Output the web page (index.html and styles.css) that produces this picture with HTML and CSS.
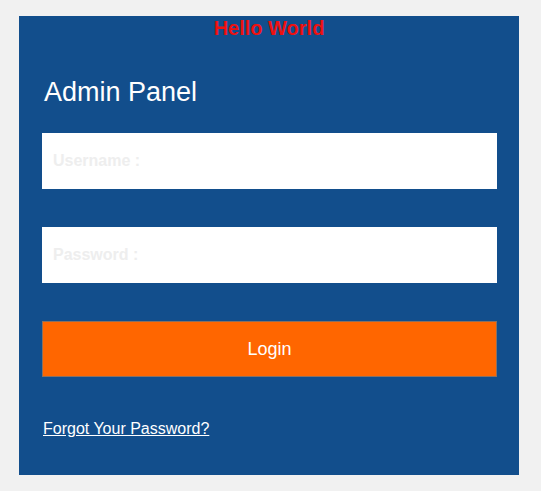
FILE: index.html
```html
<!DOCTYPE html>
<html>
<head>
<meta charset="utf-8">
<title>Admin Panel</title>
<link rel="stylesheet" href="styles.css">
</head>
<body>
<div class="panel">
  <h3 class="hello">Hello World</h3>
  <h2 class="title">Admin Panel</h2>
  <form class="form">
    <input class="field" type="text" placeholder="Username :">
    <input class="field" type="password" placeholder="Password :">
    <button class="login" type="button">Login</button>
  </form>
  <div class="forgot"><a href="#">Forgot Your Password?</a></div>
</div>
</body>
</html>
```

FILE: styles.css
```css
html, body {
  margin: 0;
  padding: 0;
}
body {
  background: #f1f1f1;
  font-family: "Liberation Sans", Arial, sans-serif;
  padding: 16px 0 0 19px;
}
.panel {
  width: 500px;
  height: 459px;
  background: #124e8c;
  box-sizing: border-box;
  padding: 2px 0 0 0;
}
.hello {
  margin: 0;
  font-size: 20px;
  line-height: 20px;
  font-weight: bold;
  color: #ee1111;
  text-align: center;
}
.title {
  margin: 41px 0 0 25px;
  font-size: 27px;
  line-height: 27px;
  font-weight: normal;
  color: #ffffff;
}
.form {
  margin: 27px 0 0 23px;
  width: 455px;
  display: flex;
  flex-direction: column;
  gap: 38px;
}
.field {
  display: block;
  width: 455px;
  height: 56px;
  box-sizing: border-box;
  border: none;
  outline: none;
  background: #ffffff;
  padding: 0 11px;
  margin: 0;
  font-family: "Liberation Sans", Arial, sans-serif;
  font-size: 16px;
  font-weight: bold;
  color: #333;
}
.field::placeholder {
  color: #eeeeee;
  opacity: 1;
}
.login {
  display: block;
  width: 455px;
  height: 56px;
  box-sizing: border-box;
  margin: 0;
  border: 1px solid #8a7060;
  background: #ff6600;
  color: #ffffff;
  font-family: "Liberation Sans", Arial, sans-serif;
  font-size: 18px;
  padding: 0;
}
.forgot {
  margin: 43px 0 0 24px;
  font-size: 16px;
  line-height: 18px;
}
.forgot a {
  color: #ffffff;
  text-decoration: underline;
}
```
